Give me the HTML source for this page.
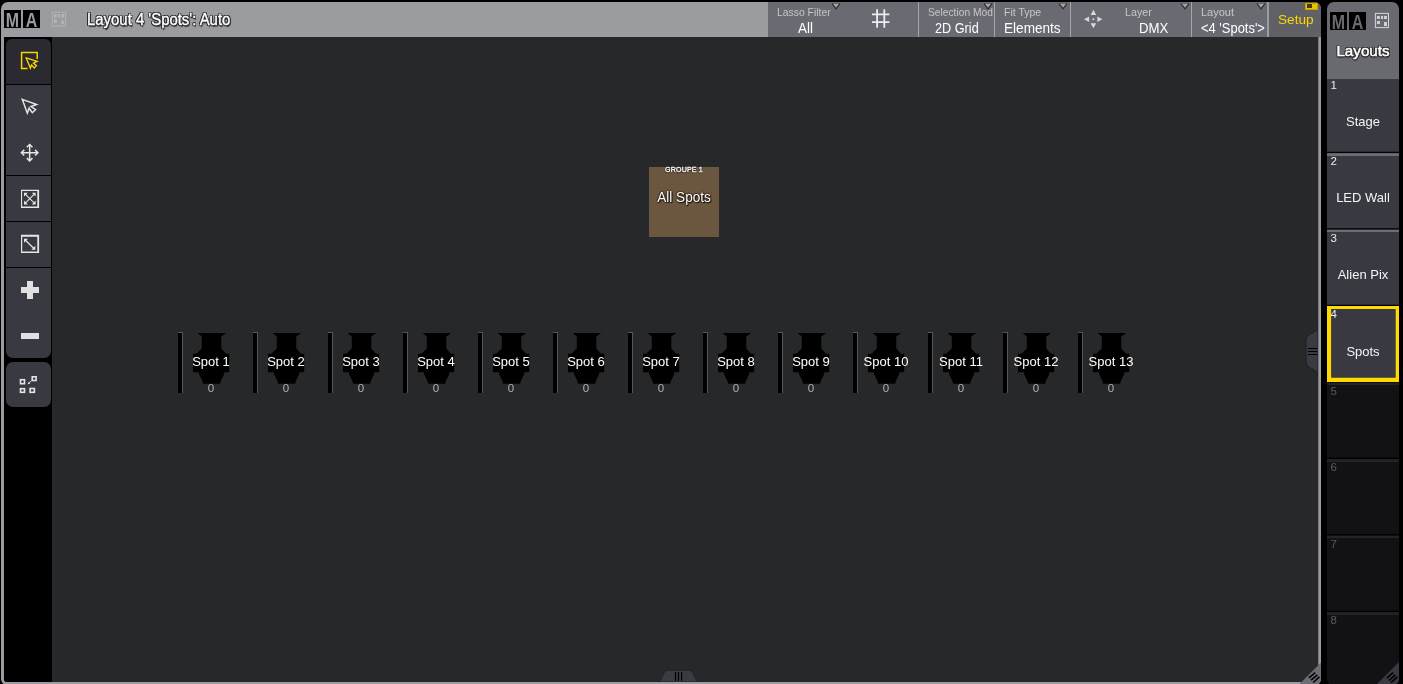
<!DOCTYPE html>
<html lang="en">
<head>
<meta charset="utf-8">
<title>Layout 4 'Spots'</title>
<style>
html,body{margin:0;padding:0;background:#000;}
body{width:1403px;height:684px;overflow:hidden;position:relative;font-family:"Liberation Sans",sans-serif;color:#fff;}
.abs{position:absolute;}
.ma{width:17px;height:18px;background:#000;overflow:hidden;}
.ma span{position:absolute;left:-4px;top:0;width:25px;text-align:center;font-size:21px;line-height:19px;font-weight:bold;transform:scaleX(0.76);transform-origin:50% 50%;}
#win{left:1px;top:2px;width:1320px;height:683px;background:#9a9ca0;border-radius:7px 7px 6px 6px;overflow:hidden;}
#canvas{left:3px;top:35px;width:1314px;height:645px;background:#27282a;border-radius:0 0 3px 3px;overflow:hidden;}
#toolcol{left:0;top:0;width:48px;height:645px;background:#000;}
.tb{position:absolute;left:2px;width:45px;background:#393942;}
.title{left:86px;top:8px;font-size:16px;line-height:20px;transform:scaleX(0.932);-webkit-text-stroke:0.35px #fff;transform-origin:0 50%;white-space:nowrap;color:#fff;
 text-shadow:-1px -1px 0 #2e2e30,1px -1px 0 #2e2e30,-1px 1px 0 #2e2e30,1px 1px 0 #2e2e30,0 1px 0 #2e2e30,0 -1px 0 #2e2e30,1px 0 0 #2e2e30,-1px 0 0 #2e2e30,1px 2px 1px #333;}
#bar{left:767px;top:0;width:553px;height:35px;background:#6a6a73;}
.sep{position:absolute;top:0;width:1px;height:35px;background:#a4a4aa;}
.lbl{position:absolute;top:4px;font-size:11px;line-height:12px;color:#c6c6ca;white-space:nowrap;transform-origin:0 50%;}
.val{position:absolute;top:18px;font-size:14px;line-height:16px;color:#fff;white-space:nowrap;transform-origin:0 50%;}
.tri{position:absolute;top:0.5px;width:10px;height:7px;}
#pool{left:1327px;top:2px;width:72px;height:683px;background:#000;border-radius:7px 7px 6px 6px;overflow:hidden;}
#pool .num{position:absolute;left:3.5px;font-size:11.5px;line-height:12px;color:#ececec;}
#pool .num.e{color:#5a5a5e;}
#pool .name{position:absolute;left:0;width:72px;text-align:center;font-size:13px;line-height:15px;color:#f4f4f4;white-space:nowrap;}
.ptitle{left:0;top:39px;width:72px;text-align:center;font-size:15.5px;line-height:20px;color:#fff;-webkit-text-stroke:0.5px #fff;transform:scaleX(0.98);
 text-shadow:-1px -1px 0 #2a2a2c,1px -1px 0 #2a2a2c,-1px 1px 0 #2a2a2c,1px 1px 0 #2a2a2c,0 1px 0 #2a2a2c,0 -1px 0 #2a2a2c,1px 0 0 #2a2a2c,-1px 0 0 #2a2a2c,0 2px 1px #333;}
.spot{position:absolute;top:295px;width:60px;height:62px;}
.spot .bar{position:absolute;left:0;top:0;width:5px;height:61px;background:#000;border-top:1px solid #55565a;border-right:1px solid #55565a;box-sizing:border-box;}
.spot svg{position:absolute;left:14px;top:0;}
.spot .nm{position:absolute;left:3px;width:60px;top:22px;text-align:center;font-size:13px;line-height:15px;color:#fff;white-space:nowrap;}
.spot .zv{position:absolute;left:3px;width:60px;top:50px;text-align:center;font-size:11.5px;line-height:12px;color:#b2b2b4;}
</style>
</head>
<body>
<div id="root" class="abs" style="left:0;top:0;width:1403px;height:684px;will-change:transform;">
<div id="win" class="abs">
  <!-- MA logo -->
  <div class="abs ma" style="left:3px;top:8px;color:#9a9ca0;"><span>M</span></div>
  <div class="abs ma" style="left:22px;top:8px;color:#9a9ca0;"><span>A</span></div>
  <svg class="abs" style="left:50px;top:9px" width="17" height="17" viewBox="0 0 17 17"><rect x="1.3" y="1.3" width="13.3" height="13.7" fill="none" stroke="#b2b2b6" stroke-width="1"/><g fill="#b4b4b8"><rect x="2.9" y="3" width="2.9" height="3.7"/><rect x="7" y="3" width="1.9" height="3.7"/><rect x="10.2" y="3" width="2.9" height="3.7"/><rect x="2.9" y="8.2" width="2.9" height="3.8"/><rect x="10.2" y="9.6" width="2.9" height="3.7"/></g></svg>
  <div class="abs title">Layout 4 'Spots': Auto</div>

  <div id="bar" class="abs">
    <div class="lbl" style="left:9px;transform:scaleX(0.944);">Lasso Filter</div>
    <div class="val" style="left:29.5px;transform:scaleX(0.96);">All</div>
    <svg class="tri" style="left:63px" viewBox="0 0 10 7"><path d="M1.2 0.9L5 5.9L8.800 0.900" fill="#a2a2a8" stroke="#2c2c31" stroke-width="1.200" stroke-linejoin="round" stroke-linecap="round"/></svg>
    <svg class="abs" style="left:102px;top:6px" width="22" height="22" viewBox="0 0 22 22"><g stroke="#ededed" stroke-width="1.800" fill="none"><path d="M7.100 1.200V19.800M14.300 1.200V19.800M2 6.300H19.400M2 14.200H19.400"/></g></svg>
    <div class="sep" style="left:150px"></div>
    <div class="abs" style="left:151px;top:0;width:74.500px;height:35px;overflow:hidden;">
      <div class="lbl" style="left:9px;transform:scaleX(0.93);">Selection Mod</div>
    </div>
    <div class="val" style="left:167px;transform:scaleX(0.906);">2D Grid</div>
    <svg class="tri" style="left:214.5px" viewBox="0 0 10 7"><path d="M1.2 0.9L5 5.9L8.800 0.900" fill="#a2a2a8" stroke="#2c2c31" stroke-width="1.200" stroke-linejoin="round" stroke-linecap="round"/></svg>
    <div class="sep" style="left:226px"></div>
    <div class="lbl" style="left:236px;transform:scaleX(0.955);">Fit Type</div>
    <div class="val" style="left:236px;transform:scaleX(0.97);">Elements</div>
    <svg class="tri" style="left:290.2px" viewBox="0 0 10 7"><path d="M1.2 0.9L5 5.9L8.800 0.900" fill="#a2a2a8" stroke="#2c2c31" stroke-width="1.200" stroke-linejoin="round" stroke-linecap="round"/></svg>
    <div class="sep" style="left:302px"></div>
    <svg class="abs" style="left:315px;top:7px" width="21" height="21" viewBox="1083 9 21 21"><g fill="#d8d8da"><path d="M1093.400 9.800L1096.200 15H1090.600Z"/><path d="M1093.400 28.200L1096.200 23.300H1090.600Z"/><path d="M1084 19.300L1089.100 16.600V22Z"/><path d="M1102.400 19.300L1097.400 16.600V22Z"/><circle cx="1093.400" cy="19.300" r="1"/></g></svg>
    <div class="lbl" style="left:357px;transform:scaleX(0.973);">Layer</div>
    <div class="val" style="left:371px;transform:scaleX(0.94);">DMX</div>
    <svg class="tri" style="left:411.6px" viewBox="0 0 10 7"><path d="M1.2 0.9L5 5.9L8.800 0.900" fill="#a2a2a8" stroke="#2c2c31" stroke-width="1.200" stroke-linejoin="round" stroke-linecap="round"/></svg>
    <div class="sep" style="left:423px"></div>
    <div class="lbl" style="left:433px;transform:scaleX(1.0);">Layout</div>
    <div class="val" style="left:433px;transform:scaleX(0.924);">&lt;4 'Spots'&gt;</div>
    <svg class="tri" style="left:487.5px" viewBox="0 0 10 7"><path d="M1.2 0.9L5 5.9L8.800 0.900" fill="#a2a2a8" stroke="#2c2c31" stroke-width="1.200" stroke-linejoin="round" stroke-linecap="round"/></svg>
    <div class="sep" style="left:499px;width:2px;background:#9b9ba2"></div>
    <div class="abs" style="left:501px;top:0;width:52px;height:35px;background:#606067;"></div>
    <div class="abs" style="left:509.500px;top:10px;font-size:13px;line-height:16px;color:#fad700;white-space:nowrap;transform:scaleX(1.05);transform-origin:0 50%;">Setup</div>
    <div class="abs" style="left:537px;top:1px;width:13px;height:7px;background:#e6c200;box-sizing:border-box;border:1px solid #c4a400;"></div>
    <div class="abs" style="left:539px;top:2px;width:4.500px;height:4px;background:#453a00;"></div>
  </div>

  <div class="abs" style="left:1317px;top:35px;width:1px;height:648px;background:#77777c;"></div>
  <div id="canvas" class="abs">
    <div id="toolcol" class="abs">
      <div class="tb" style="top:2px;height:45px;background:#2a2a30;border-radius:6px 6px 0 0;"></div>
      <div class="tb" style="top:48px;height:90px;"></div>
      <div class="tb" style="top:139px;height:45px;"></div>
      <div class="tb" style="top:185px;height:45px;"></div>
      <div class="tb" style="top:231px;height:90px;border-radius:0 0 7px 7px;"></div>
      <div class="tb" style="top:325px;height:45px;border-radius:7px;"></div>
      <svg class="abs" style="left:0;top:0" width="48" height="380" viewBox="4 37 48 380">
        <!-- icon1 select-rect -->
        <g fill="none" stroke="#fcd400" stroke-width="1.5" stroke-linejoin="miter">
          <path d="M37.200 59V52.600H21.600V68.600H27.500"/>
          <path d="M26.22 57.93L37.10 61.32L33.41 63.04L36.46 65.65L34.30 67.95L31.56 64.99L30.38 68.12Z" stroke-width="1.300"/>
        </g>
        <!-- icon2 pointer -->
        <path d="M22.27 99.35L36.64 104.42L31.00 106.51L35.59 109.68L32.31 112.74L29.10 108.20L27.30 113.15Z" fill="none" stroke="#e6e6e6" stroke-width="1.500"/>
        <!-- icon3 move -->
        <g fill="none" stroke="#e6e6e6" stroke-width="1.500" transform="translate(-0.35,-0.3)">
          <path d="M30 144.800V161.200M21.800 153H38.200"/>
          <path d="M27.200 147.600L30 144.800L32.800 147.600M27.200 158.400L30 161.200L32.800 158.400M24.600 150.200L21.800 153L24.600 155.800M35.400 150.200L38.200 153L35.400 155.800"/>
        </g>
        <!-- icon4 fit all -->
        <path fill-rule="evenodd" fill="#e6e6e6" d="M21 189.800H39.100V208.100H21ZM22.100 190.900V206.400H37.300V190.900Z"/>
        <path d="M25 193.800L34.600 203.400M34.600 193.800L25 203.400" stroke="#e6e6e6" stroke-width="1.100" fill="none"/>
        <path fill="#e6e6e6" d="M24 192.800H27.800L24 196.600ZM35.600 192.800H31.800L35.600 196.600ZM24 204.400H27.800L24 200.600ZM35.600 204.400H31.800L35.600 200.600Z"/>
        <!-- icon5 fit -->
        <path fill-rule="evenodd" fill="#e6e6e6" d="M21 234.800H39.100V253.100H21ZM22.200 236.700V251.600H37.300V236.700Z"/>
        <path d="M25.200 240L34.200 248.700" stroke="#e6e6e6" stroke-width="1.200" fill="none"/>
        <path fill="#e6e6e6" d="M24 238.800H28L24 242.800ZM35.300 249.800H31.300L35.300 245.800Z"/>
        <!-- plus / minus -->
        <path d="M27 281H33V287H39V293H33V299H27V293H21V287H27Z" fill="#e0e0e0"/>
        <rect x="21" y="333" width="18" height="6" fill="#e0e0e0"/>
        <!-- icon8 -->
        <g fill="none" stroke="#e4e4e4" stroke-width="1.600">
          <rect x="32.200" y="376.800" width="3.900" height="3.700"/>
          <rect x="20.500" y="379.700" width="4" height="4"/>
          <rect x="20.500" y="388.700" width="4" height="3.600"/>
          <rect x="30.100" y="388.500" width="4.300" height="3.800"/>
          <path d="M31.300 380.900L28.600 383.500" stroke-width="1"/>
        </g>
        <path fill="#e4e4e4" d="M27.800 384.200L28.300 381.900L30.200 383.700Z"/>
      </svg>
    </div>

    <!-- group box -->
    <div class="abs" style="left:645px;top:130px;width:70px;height:70px;background:#6b5640;"></div>
    <div class="abs" style="left:645px;top:129px;width:70px;text-align:center;font-size:7px;line-height:8px;letter-spacing:0.2px;color:#fff;-webkit-text-stroke:0.3px #fff;text-shadow:0 0 1px #000,0 0 1px #000,0 1px 1px #000;">GROUPE 1</div>
    <div class="abs" style="left:645px;top:152px;width:70px;text-align:center;font-size:14px;line-height:16px;transform:scaleX(0.97);color:#fff;text-shadow:0 0 2px #1a1206,0 0 2px #1a1206,1px 1px 1px #1a1206;white-space:nowrap;">All Spots</div>

    <!-- spots -->
    <div class="spot" style="left:174px"><div class="bar"></div><svg width="38" height="53" viewBox="192 332 38 53"><path d="M197.600 333H226.200L221.300 336.500V348.600L226 353.700H229.200V372.200H224.200V374L220.400 382V383.800H202.900V382L199 374V372.200H193V353.700H196.300L201.800 348.600V336.500Z" fill="#000"/></svg><div class="nm">Spot 1</div><div class="zv">0</div></div>
    <div class="spot" style="left:249px"><div class="bar"></div><svg width="38" height="53" viewBox="192 332 38 53"><path d="M197.600 333H226.200L221.300 336.500V348.600L226 353.700H229.200V372.200H224.200V374L220.400 382V383.800H202.900V382L199 374V372.200H193V353.700H196.300L201.800 348.600V336.500Z" fill="#000"/></svg><div class="nm">Spot 2</div><div class="zv">0</div></div>
    <div class="spot" style="left:324px"><div class="bar"></div><svg width="38" height="53" viewBox="192 332 38 53"><path d="M197.600 333H226.200L221.300 336.500V348.600L226 353.700H229.200V372.200H224.200V374L220.400 382V383.800H202.900V382L199 374V372.200H193V353.700H196.300L201.800 348.600V336.500Z" fill="#000"/></svg><div class="nm">Spot 3</div><div class="zv">0</div></div>
    <div class="spot" style="left:399px"><div class="bar"></div><svg width="38" height="53" viewBox="192 332 38 53"><path d="M197.600 333H226.200L221.300 336.500V348.600L226 353.700H229.200V372.200H224.200V374L220.400 382V383.800H202.900V382L199 374V372.200H193V353.700H196.300L201.800 348.600V336.500Z" fill="#000"/></svg><div class="nm">Spot 4</div><div class="zv">0</div></div>
    <div class="spot" style="left:474px"><div class="bar"></div><svg width="38" height="53" viewBox="192 332 38 53"><path d="M197.600 333H226.200L221.300 336.500V348.600L226 353.700H229.200V372.200H224.200V374L220.400 382V383.800H202.900V382L199 374V372.200H193V353.700H196.300L201.800 348.600V336.500Z" fill="#000"/></svg><div class="nm">Spot 5</div><div class="zv">0</div></div>
    <div class="spot" style="left:549px"><div class="bar"></div><svg width="38" height="53" viewBox="192 332 38 53"><path d="M197.600 333H226.200L221.300 336.500V348.600L226 353.700H229.200V372.200H224.200V374L220.400 382V383.800H202.900V382L199 374V372.200H193V353.700H196.300L201.800 348.600V336.500Z" fill="#000"/></svg><div class="nm">Spot 6</div><div class="zv">0</div></div>
    <div class="spot" style="left:624px"><div class="bar"></div><svg width="38" height="53" viewBox="192 332 38 53"><path d="M197.600 333H226.200L221.300 336.500V348.600L226 353.700H229.200V372.200H224.200V374L220.400 382V383.800H202.900V382L199 374V372.200H193V353.700H196.300L201.800 348.600V336.500Z" fill="#000"/></svg><div class="nm">Spot 7</div><div class="zv">0</div></div>
    <div class="spot" style="left:699px"><div class="bar"></div><svg width="38" height="53" viewBox="192 332 38 53"><path d="M197.600 333H226.200L221.300 336.500V348.600L226 353.700H229.200V372.200H224.200V374L220.400 382V383.800H202.900V382L199 374V372.200H193V353.700H196.300L201.800 348.600V336.500Z" fill="#000"/></svg><div class="nm">Spot 8</div><div class="zv">0</div></div>
    <div class="spot" style="left:774px"><div class="bar"></div><svg width="38" height="53" viewBox="192 332 38 53"><path d="M197.600 333H226.200L221.300 336.500V348.600L226 353.700H229.200V372.200H224.200V374L220.400 382V383.800H202.900V382L199 374V372.200H193V353.700H196.300L201.800 348.600V336.500Z" fill="#000"/></svg><div class="nm">Spot 9</div><div class="zv">0</div></div>
    <div class="spot" style="left:849px"><div class="bar"></div><svg width="38" height="53" viewBox="192 332 38 53"><path d="M197.600 333H226.200L221.300 336.500V348.600L226 353.700H229.200V372.200H224.200V374L220.400 382V383.800H202.900V382L199 374V372.200H193V353.700H196.300L201.800 348.600V336.500Z" fill="#000"/></svg><div class="nm">Spot 10</div><div class="zv">0</div></div>
    <div class="spot" style="left:924px"><div class="bar"></div><svg width="38" height="53" viewBox="192 332 38 53"><path d="M197.600 333H226.200L221.300 336.500V348.600L226 353.700H229.200V372.200H224.200V374L220.400 382V383.800H202.900V382L199 374V372.200H193V353.700H196.300L201.800 348.600V336.500Z" fill="#000"/></svg><div class="nm">Spot 11</div><div class="zv">0</div></div>
    <div class="spot" style="left:999px"><div class="bar"></div><svg width="38" height="53" viewBox="192 332 38 53"><path d="M197.600 333H226.200L221.300 336.500V348.600L226 353.700H229.200V372.200H224.200V374L220.400 382V383.800H202.900V382L199 374V372.200H193V353.700H196.300L201.800 348.600V336.500Z" fill="#000"/></svg><div class="nm">Spot 12</div><div class="zv">0</div></div>
    <div class="spot" style="left:1074px"><div class="bar"></div><svg width="38" height="53" viewBox="192 332 38 53"><path d="M197.600 333H226.200L221.300 336.500V348.600L226 353.700H229.200V372.200H224.200V374L220.400 382V383.800H202.900V382L199 374V372.200H193V353.700H196.300L201.800 348.600V336.500Z" fill="#000"/></svg><div class="nm">Spot 13</div><div class="zv">0</div></div>

    <!-- right handle -->
    <svg class="abs" style="left:1298px;top:286px" width="16" height="56" viewBox="1302 323 16 56">
      <path d="M1318 326C1318 334 1306 332 1306 341V361C1306 370 1318 368 1318 376Z" fill="#393a42" stroke="#1e1f21" stroke-width="1"/>
      <path d="M1308 348.500H1317M1308 351.500H1317M1308 354.500H1317" stroke="#000" stroke-width="1.200"/>
    </svg>
    <!-- bottom handle -->
    <svg class="abs" style="left:650px;top:630px" width="56" height="15" viewBox="654 667 56 15">
      <path d="M657 682C663 682 662 670 668 670H689C695 670 694 682 700 682Z" fill="#393a42" stroke="#1e1f21" stroke-width="1"/>
      <path d="M675.500 672V681M678.500 672V681M681.600 672V681" stroke="#000" stroke-width="1.200"/>
    </svg>
    
  </div>
  <svg class="abs" style="left:1296px;top:659px" width="24" height="24" viewBox="1296 659 24 24">
    <path d="M1297.500 683L1320 660.500V683Z" fill="#6c6c74"/>
    <path d="M1307.900 675.900L1314.200 670.600M1310 678.100L1316.400 672.800M1312.200 680.500L1318.400 674.800" stroke="#000" stroke-width="1.600" fill="none"/>
  </svg>
</div>

<div id="pool" class="abs">
  <svg class="abs" style="left:0;top:0" width="72" height="683" viewBox="0 0 72 683"><rect x="0" y="0" width="72" height="77" fill="#696a6f"/><rect x="0" y="77.0" width="72" height="72.7" fill="#393942"/><rect x="0" y="151.1" width="72" height="2.9" fill="#6c6c73"/><rect x="0" y="154.0" width="72" height="72.2" fill="#393942"/><rect x="0" y="227.6" width="72" height="2.9" fill="#6c6c73"/><rect x="0" y="230.5" width="72" height="72.2" fill="#393942"/><rect x="0" y="304.1" width="72" height="2.9" fill="#6c6c73"/><rect x="0" y="307.0" width="72" height="72.2" fill="#393942"/><rect x="0" y="380.6" width="72" height="2.9" fill="#242426"/><rect x="0" y="383.5" width="72" height="72.2" fill="#121214"/><rect x="0" y="457.1" width="72" height="2.9" fill="#242426"/><rect x="0" y="460.0" width="72" height="72.2" fill="#121214"/><rect x="0" y="533.6" width="72" height="2.9" fill="#242426"/><rect x="0" y="536.5" width="72" height="72.2" fill="#121214"/><rect x="0" y="610.1" width="72" height="2.9" fill="#242426"/><rect x="0" y="613.0" width="72" height="72.2" fill="#121214"/><path fill-rule="evenodd" fill="#ffd900" d="M0 303.900H72V379.900H0ZM4.100 307V375.800H68.700V307Z"/></svg>
  <div class="abs ma" style="left:3px;top:10px;color:#696a6f;"><span>M</span></div>
  <div class="abs ma" style="left:22px;top:10px;color:#696a6f;"><span>A</span></div>
  <svg class="abs" style="left:47px;top:10px" width="17" height="18" viewBox="0 0 17 18"><rect x="1.4" y="1.4" width="13.1" height="14.2" fill="none" stroke="#d6d6d9" stroke-width="1"/><g fill="#d0d0d3"><rect x="2.9" y="3.9" width="3" height="3.1"/><rect x="7" y="3.9" width="2" height="3.1"/><rect x="9.9" y="3.9" width="3.1" height="3.1"/><rect x="2.9" y="9" width="3" height="3.1"/><rect x="10" y="10" width="3" height="4.1"/></g></svg>
  <div class="abs ptitle">Layouts</div>
  <div class="num" style="top:77px">1</div>
  <div class="name" style="top:112px">Stage</div>
  <div class="num" style="top:153px">2</div>
  <div class="name" style="top:188px">LED Wall</div>
  <div class="num" style="top:230px">3</div>
  <div class="name" style="top:265px">Alien Pix</div>
  <div class="num" style="top:306px">4</div>
  <div class="name" style="top:342px">Spots</div>
  <div class="num e" style="top:383px">5</div>
  <div class="num e" style="top:459px">6</div>
  <div class="num e" style="top:536px">7</div>
  <div class="num e" style="top:612px">8</div>
  <svg class="abs" style="left:48px;top:659px" width="24" height="24" viewBox="48 659 24 24">
    <path d="M49 683L72 660V683Z" fill="#393942"/>
    <path d="M59.800 676.100L66.200 670.600M62 678.500L68.400 672.800M64 680.700L70.400 674.800" stroke="#000" stroke-width="1.600" fill="none"/>
  </svg>
</div>
</div>
</body>
</html>
